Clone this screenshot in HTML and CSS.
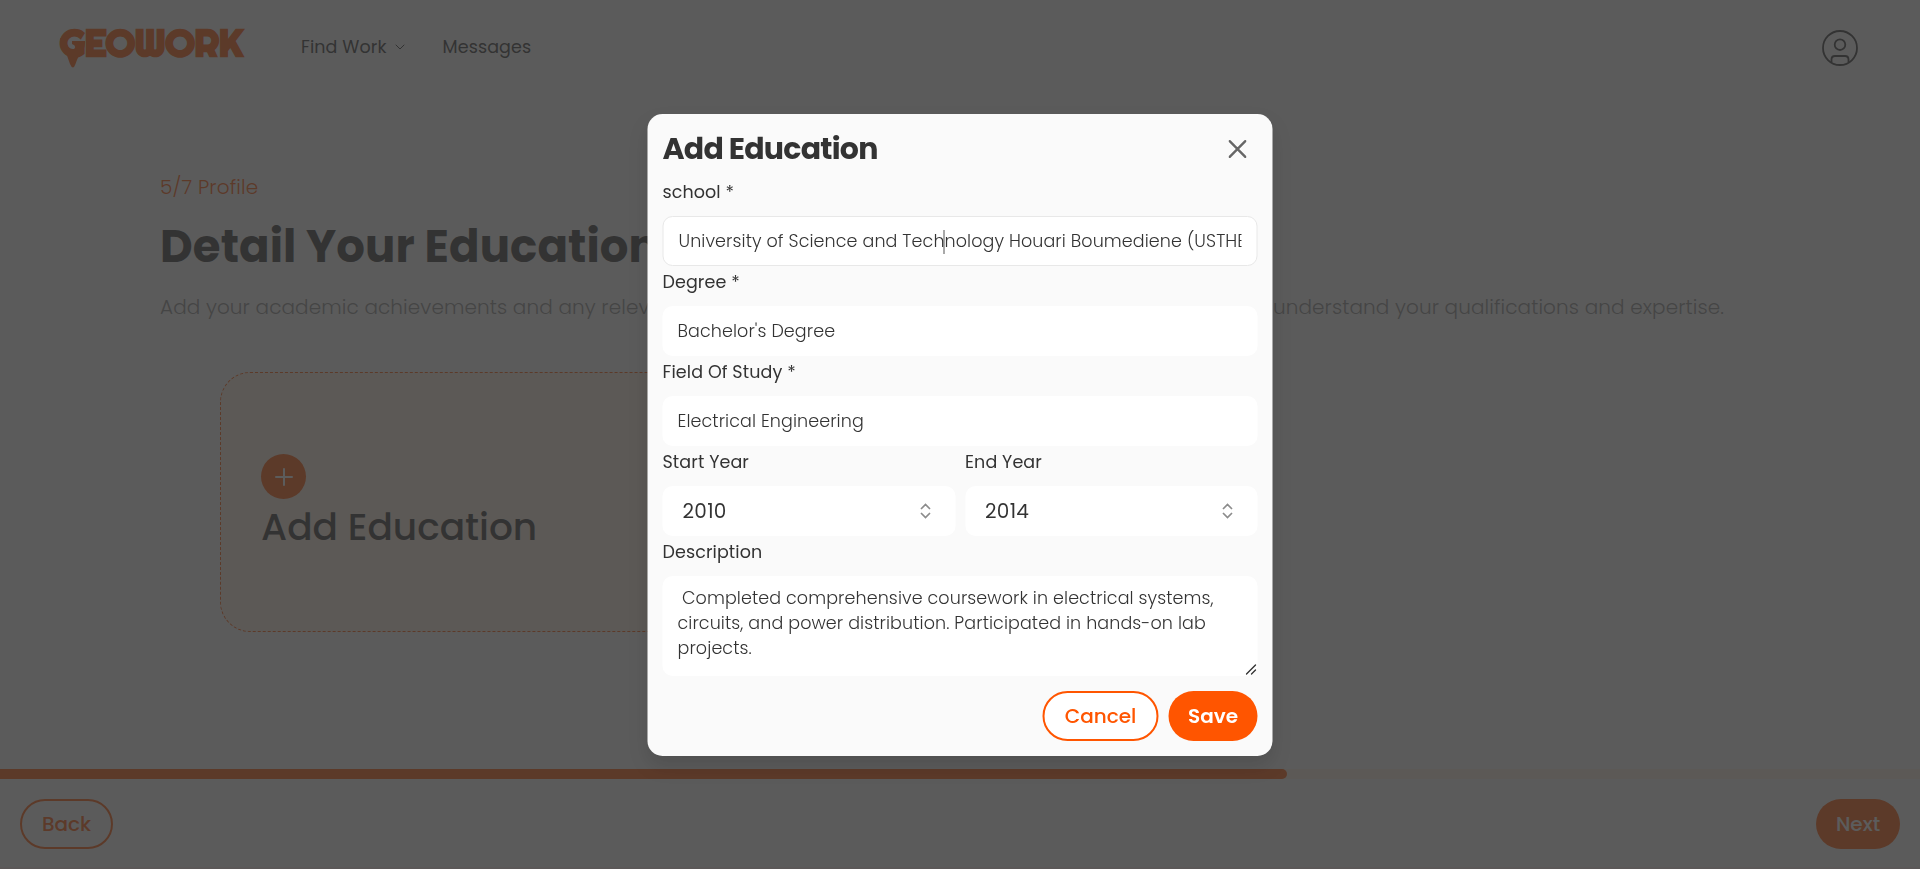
FILE: index.html
```html
<!DOCTYPE html>
<html lang="en">
<head>
<meta charset="utf-8">
<title>Geowork - Education</title>
<link rel="stylesheet" href="styles.css">
</head>
<body>
<div class="page">
  <header class="header">
    <div class="logo">
      <svg class="logo-pin" width="26" height="31" viewBox="0 0 26 31"><path d="M0 0Q0 7 3.500 11.500Q8 18 10 26Q13 33 15.500 26Q18 18 22.500 13Q25.500 9 25 3H12V6Q17 8 14 11Q7 12 6 2Z"/></svg>
      <span class="logo-text">GEOWORK</span>
    </div>
    <nav class="nav">
      <a class="nav-link">Find Work
        <svg width="10" height="6" viewBox="0 0 10 6"><path d="M1 1L5 5L9 1"/></svg>
      </a>
      <a class="nav-link">Messages</a>
    </nav>
    <svg class="avatar" width="36" height="36" viewBox="0 0 36 36"><circle cx="18" cy="18" r="17"/><circle cx="18" cy="14.700" r="5.300"/><path d="M9.500 32V29.500Q9.500 26 13 26H23Q26.500 26 26.500 29.500V32"/></svg>
  </header>

  <main class="main">
    <p class="step">5/7 Profile</p>
    <h1 class="heading">Detail Your Education</h1>
    <p class="intro"><span>Add your academic achievements and any relevant certifications or courses to help employers</span><span>understand your qualifications and expertise.</span></p>
    <section class="add-card">
      <span class="plus"><svg width="18" height="18" viewBox="0 0 18 18"><path d="M9 1V17M1 9H17"/></svg></span>
      <h2 class="card-title">Add Education</h2>
    </section>
  </main>

  <footer class="footer">
    <div class="progress"><div class="progress-bar" style="width:67.030%"></div></div>
    <div class="footer-row">
      <button class="btn btn-outline back">Back</button>
      <button class="btn btn-solid next">Next</button>
    </div>
  </footer>
</div>

<div class="overlay">
  <div class="modal">
    <div class="modal-head">
      <h2 class="modal-title">Add Education</h2>
      <svg class="close" width="18" height="18" viewBox="0 0 18 18"><path d="M1.200 1.200L16.800 16.800M16.800 1.200L1.200 16.800"/></svg>
    </div>

    <label class="label">school *</label>
    <div class="field focused"><div class="clip">University of Science and Tech<i class="caret"></i>nology Houari Boumediene (USTHB)</div></div>

    <label class="label">Degree *</label>
    <div class="field">Bachelor's Degree</div>

    <label class="label">Field Of Study *</label>
    <div class="field">Electrical Engineering</div>

    <div class="years">
      <div>
        <label class="label">Start Year</label>
        <div class="field year">2010
          <svg width="12" height="16" viewBox="0 0 12 16"><path d="M1.500 6L6 1.500L10.500 6M1.500 10L6 14.500L10.500 10"/></svg>
        </div>
      </div>
      <div>
        <label class="label">End Year</label>
        <div class="field year">2014
          <svg width="12" height="16" viewBox="0 0 12 16"><path d="M1.500 6L6 1.500L10.500 6M1.500 10L6 14.500L10.500 10"/></svg>
        </div>
      </div>
    </div>

    <label class="label">Description</label>
    <div class="field area">
      <div class="first">Completed comprehensive coursework in electrical systems,</div>
      <div>circuits, and power distribution. Participated in hands-on lab</div>
      <div>projects.</div>
      <svg class="grip" width="12" height="12" viewBox="0 0 12 12"><path d="M1 10L10 1M6 10L10 6"/></svg>
    </div>

    <div class="actions">
      <button class="btn btn-outline cancel">Cancel</button>
      <button class="btn btn-solid save">Save</button>
    </div>
  </div>
</div>
</body>
</html>
```
FILE: styles.css
```css
* { box-sizing: border-box; }

body {
  margin: 0;
  font-family: Poppins, Inter, sans-serif;
  letter-spacing: .1px;
  color: #333;
  background: #fafafa;
  overflow: hidden;
}

h1, h2, p { margin: 0; }
svg { fill: none; stroke: currentColor; stroke-linecap: round; stroke-linejoin: round; flex: none; }

.page { height: 869px; display: flex; flex-direction: column; }

.header { height: 94px; padding: 0 62px 0 60px; display: flex; align-items: center; }
.logo { position: relative; width: 187px; height: 94px; }
.logo-text {
  display: block;
  font-family: Righteous, Poppins, sans-serif;
  font-size: 37.500px;
  font-weight: 900;
  line-height: 86px;
  letter-spacing: -.1px;
  color: #f50;
  -webkit-text-stroke: 1.500px #f50;
}
.logo-pin { position: absolute; left: 0; top: 38px; fill: #f50; stroke: none; }
.nav { display: flex; gap: 38px; margin-left: 54px; }
.nav-link {
  display: flex;
  align-items: center;
  gap: 8px;
  font-size: 17.500px;
  line-height: 24px;
}
.avatar { margin-left: auto; margin-top: 2px; stroke-width: 1.800; }

.main { flex: 1; padding: 78px 197px 0 160px; }
.step { font-size: 20px; font-weight: 300; line-height: 30px; letter-spacing: .15px; color: #f50; }
.heading { margin-top: 15px; font-size: 45px; line-height: 60px; }
.intro {
  display: flex;
  justify-content: space-between;
  margin-top: 15px;
  font-size: 20px;
  font-weight: 300;
  line-height: 30px;
  margin-right: -1px;
  color: #8c8c8c;
  white-space: nowrap;
}
.add-card {
  width: 600px;
  height: 260px;
  margin: 50px 0 0 60px;
  padding: 81px 40px 0;
  border: 1px dashed #f50;
  border-radius: 30px;
  background: #ffeee0;
}
.plus {
  display: flex;
  align-items: center;
  justify-content: center;
  width: 45px;
  height: 45px;
  border-radius: 50%;
  background: #f50;
  color: #fff;
}
.plus svg { stroke-width: 2; }
.card-title { margin-top: 3px; font-size: 37.500px; font-weight: 500; line-height: 50px; letter-spacing: 0; }

.footer { height: 100px; border-bottom: 2px solid #f8ecec; }
.progress { height: 10px; background: #ffeee0; }
.progress-bar { height: 10px; background: #f50; border-radius: 0 5px 5px 0; }
.footer-row { display: flex; justify-content: space-between; padding: 20px 20px 0; }

.btn {
  height: 50px;
  padding: 0;
  border-radius: 25px;
  font: 500 20px/1 Poppins, Inter, sans-serif;
}
.btn-outline { border: 2px solid #f50; background: #fff; color: #f50; }
.btn-solid { border: 0; background: #f50; color: #fff; }
.back { width: 93px; background: transparent; }
.next { width: 84px; }
.cancel { width: 116px; }
.save { width: 89px; font-weight: 600; }

.overlay {
  position: fixed;
  inset: 0;
  background: rgba(51, 51, 51, .8);
}
.modal {
  position: absolute;
  left: 50%;
  top: 50%;
  transform: translate(-50%, -50%);
  width: 625px;
  height: 642px;
  padding: 15px;
  border-radius: 15px;
  background: #fafafa;
  box-shadow: 0 10px 20px rgba(0, 0, 0, .12);
}
.modal-head { display: flex; align-items: center; justify-content: space-between; height: 40px; margin-bottom: 7.500px; padding-right: 11px; }
.modal-title { font-size: 30px; line-height: 40px; letter-spacing: -.750px; }
.close { color: #666; stroke-width: 2.400; }

.label { display: block; height: 40px; font-size: 17.500px; line-height: 32px; }
.field {
  height: 50px;
  padding: 0 15px;
  border-radius: 10px;
  background: #fff;
  font-size: 17.500px;
  font-weight: 300;
  line-height: 50px;
  white-space: nowrap;
}
.focused { border: 1px solid #e8e8e8; line-height: 48px; }
.clip { overflow: hidden; }
.caret { display: inline-block; width: 1px; height: 24px; margin: 0 0 0 -1px; background: #555; vertical-align: middle; }
.years { display: grid; grid-template-columns: 1fr 1fr; gap: 10px; }
.field.year {
  display: flex;
  align-items: center;
  justify-content: space-between;
  padding: 0 24px 0 20px;
  font-size: 20px;
  font-weight: 400;
  letter-spacing: .3px;
}
.year svg { color: #8c8c8c; stroke-width: 1.700; stroke-linecap: butt; stroke-linejoin: miter; }
.area { position: relative; height: 100px; padding-top: 9.500px; line-height: 25px; }
.first { padding-left: 4.500px; }
.grip { position: absolute; right: 0; bottom: 0; stroke-width: 1.400; }
.actions { display: flex; justify-content: flex-end; gap: 10px; margin-top: 14.500px; }
```
